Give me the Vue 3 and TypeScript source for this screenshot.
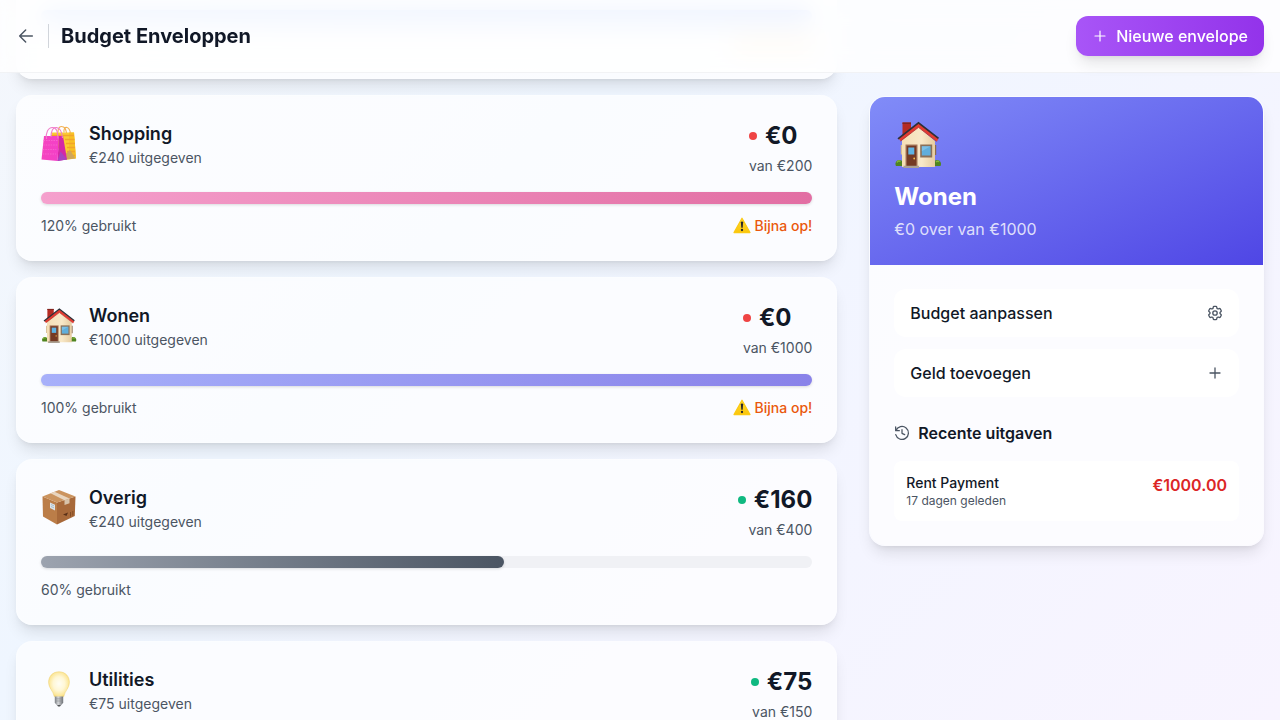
<script setup lang="ts">
interface Envelope {
  name: string
  icon: 'bags' | 'house' | 'box' | 'bulb'
  spent: number
  left: number
  total: number
  percent: number
  tone: string
}

const envelopes: Envelope[] = [
  { name: 'Shopping', icon: 'bags', spent: 240, left: 0, total: 200, percent: 120, tone: 'pink' },
  { name: 'Wonen', icon: 'house', spent: 1000, left: 0, total: 1000, percent: 100, tone: 'indigo' },
  { name: 'Overig', icon: 'box', spent: 240, left: 160, total: 400, percent: 60, tone: 'gray' },
  { name: 'Utilities', icon: 'bulb', spent: 75, left: 75, total: 150, percent: 50, tone: 'amber' },
]
</script>

<template>
  <div class="page">
    <svg class="defs" width="0" height="0" aria-hidden="true">
      <defs>
        <linearGradient id="wall" x1="0" x2="1"><stop offset="0" stop-color="#f5dfb6" /><stop offset=".6" stop-color="#f8e8c8" /><stop offset="1" stop-color="#e6cca0" /></linearGradient>
        <linearGradient id="pinkbag" x1="0" x2="1"><stop offset="0" stop-color="#f545be" /><stop offset="1" stop-color="#f43fc9" /></linearGradient>
        <radialGradient id="glass" cx=".5" cy=".48" r=".56"><stop offset="0" stop-color="#fffef4" /><stop offset=".5" stop-color="#fff7d5" /><stop offset=".85" stop-color="#fce79a" /><stop offset="1" stop-color="#f2d06d" /></radialGradient>
        <linearGradient id="metal" x1="0" x2="1"><stop offset="0" stop-color="#777b80" /><stop offset=".4" stop-color="#d5d7da" /><stop offset="1" stop-color="#6b6e73" /></linearGradient>
        <linearGradient id="warn" x1="0" y1="0" x2="0" y2="1"><stop offset="0" stop-color="#fdd835" /><stop offset="1" stop-color="#fbc60a" /></linearGradient>
        <symbol id="house" viewBox="0 0 48 48">
          <path d="M2 46c-1.600-3 .5-6 3.500-6s4 3 3 6z" fill="#4f8420" />
          <path d="M39.500 46c-1-3 .5-6 3.500-6s5 3 3.500 6z" fill="#4f8420" />
          <path d="M3 42.500c.5-1.500 2.500-2 3.500-1" stroke="#82b53d" stroke-width="1.500" fill="none" />
          <path d="M42 42c1-1.300 2.500-1 3 0" stroke="#82b53d" stroke-width="1.500" fill="none" />
          <path d="M8.500 2.500h8.500v11L8.500 20z" fill="#b52b23" />
          <path d="M8.500 2.500h8.500v1.500H8.500z" fill="#82251f" />
          <path d="M24.500 7L41 21v26H8V20z" fill="url(#wall)" />
          <path d="M41 25h1.200v10H41z" fill="#8b6c4c" />
          <path d="M6.800 25H8v9.500H6.800z" fill="#d8bd92" />
          <path d="M24.500 7.200L43 21.500l1.500-3L24.500 3 4.500 18.500 6.500 21z" fill="#e23c31" />
          <path d="M4 18.800L24.500 2.800l20 15.600" fill="none" stroke="#2d3038" stroke-width="1.700" />
          <path d="M6.500 21.200L24.500 7.400l18 14" fill="none" stroke="#b92d29" stroke-width=".8" />
          <path d="M11.500 24.500h12V47h-12z" fill="#a6785b" />
          <path d="M12.700 25.700h9.600V46h-9.600z" fill="#743a25" />
          <path d="M14.300 27.500h6v7h-6z" fill="#5eb4e5" />
          <circle cx="20.200" cy="38.500" r=".9" fill="#f6c04c" />
          <path d="M26.200 24.500h12V37.500h-12z" fill="#8b7057" />
          <path d="M27.800 26.300h8.800v9.200h-8.800z" fill="#60aedb" />
          <path d="M27.800 26.300h8.800l-8.800 5z" fill="#8bcbee" opacity=".6" />
          <path d="M9.500 45.700h15.500V48H9.500z" fill="#aaa093" />
        </symbol>
        <symbol id="bags" viewBox="0 0 36 36">
          <path d="M10 7.500H33l2 26L23 35z" fill="#fbcb32" />
          <path d="M28 7.500h5l2 26-7-8z" fill="#f8c124" />
          <path d="M10 10.500h23M24 14.500h9.500M25 18.500h9M26 22.500h8M26 26.500h8M27 30.500h7" stroke="#f2a52a" stroke-width="1.300" />
          <path d="M25 28.500l4-3.500 5.500 8.500-9 1z" fill="#cfa65a" />
          <path d="M17 7.500c0-6.500 3-6.500 5.500-5.500S25 6 25.500 8M23 7.500c-.5-4 1-5.500 3-5S29 5 29.500 8.500" fill="none" stroke="#f2b052" stroke-width="1.100" />
          <path d="M3 11h15l-1.500 25L.5 34.500z" fill="url(#pinkbag)" />
          <path d="M18 11h4l4 23.500-9.500 1.500z" fill="#d428a6" />
          <path d="M16.500 36l3-9.500 6.500 8z" fill="#a742c2" />
          <path d="M2.500 15.500h14M2.200 20h14M1.800 24.500h13.500M1.500 29h13.500" stroke="#f96bd0" stroke-width=".8" stroke-dasharray="1.500 1" />
          <path d="M5.500 14C4.500 8 7 2.500 11.500 2.500s5 4.500 5.500 11M10 12C10 6 12 2 15.500 2.500S21 7 21.500 13" fill="none" stroke="#f07cc9" stroke-width="1.100" />
        </symbol>
        <symbol id="box" viewBox="0 0 36 36">
          <path d="M1.500 7.500L16 13.500v22L2 27.500z" fill="#bb7d48" />
          <path d="M16 13.500l18.500-6-.7 19.500L16 35.500z" fill="#a8693a" />
          <path d="M1.500 7.500L18 1l16.500 6.500L16 13.500z" fill="#cb945f" />
          <path d="M9.500 4.200l4-1.500 15 6.800-5 1.700z" fill="#e8d5bf" />
          <path d="M23.500 11.200l5-1.700v4.800l-5 1.700z" fill="#d8c3aa" />
          <path d="M9 13.500l5 2.200v5.800L9 19z" fill="#dce4e9" />
          <path d="M10 15.500l3 1.300M10 17.500l3 1.300" stroke="#9fb5c3" stroke-width=".8" />
          <path d="M22 25.500l5-2-1.500 3.500z" fill="#5a3119" />
          <path d="M29.500 23v4.500M31.800 22v4.500" stroke="#784520" stroke-width=".8" />
        </symbol>
        <symbol id="bulb" viewBox="0 0 36 36">
          <path d="M18 .8C11.500.8 7.600 5.500 7.600 11.300c0 6.200 4.800 8.500 5.600 14.300h9.600c.8-5.800 5.600-8.100 5.600-14.300C28.400 5.500 24.500.8 18 .8z" fill="url(#glass)" stroke="#eed06c" stroke-width=".5" />
          <path d="M13.800 25.600h8.400v6.200l-2.500 3h-3.400l-2.500-3z" fill="url(#metal)" />
          <path d="M14 27.800h8M14 30h8" stroke="#8b8e92" stroke-width=".6" />
          <path d="M16.200 34h3.600l-.8 1.600h-2z" fill="#54565a" />
        </symbol>
      </defs>
    </svg>

    <header class="topbar">
      <div class="heading">
        <button class="back" aria-label="Terug">
          <svg width="16" height="16" viewBox="0 0 24 24" fill="none" stroke="currentColor" stroke-width="2.200" stroke-linecap="round" stroke-linejoin="round"><path d="M21.500 12H2.500M11.500 3l-9 9 9 9" /></svg>
        </button>
        <h1>Budget Enveloppen</h1>
      </div>
      <button class="create">
        <svg width="16" height="16" viewBox="0 0 16 16" fill="none" stroke="currentColor" stroke-width="1.200" stroke-linecap="round"><path d="M8 3v10M3 8h10" /></svg>
        <span>Nieuwe envelope</span>
      </button>
    </header>

    <main class="layout">
      <section class="list">
        <div class="card passed">
          <div class="track"><div class="fill blue"></div></div>
          <div class="glow"></div>
        </div>
        <article v-for="e in envelopes" :key="e.name" class="card">
          <div class="summary">
            <div class="identity">
              <svg class="emoji" width="36" height="36"><use :href="'#' + e.icon" /></svg>
              <div>
                <h3>{{ e.name }}</h3>
                <p class="small">€{{ e.spent }} uitgegeven</p>
              </div>
            </div>
            <div class="balance">
              <div class="amount">
                <span class="dot" :class="{ empty: e.left === 0 }"></span>
                <span>€{{ e.left }}</span>
              </div>
              <p class="small">van €{{ e.total }}</p>
            </div>
          </div>
          <div class="track">
            <div class="fill" :class="e.tone" :style="{ width: Math.min(e.percent, 100) + '%' }"></div>
          </div>
          <div class="usage">
            <span>{{ e.percent }}% gebruikt</span>
            <span v-if="e.percent > 80" class="alert">
              <svg width="18" height="17" viewBox="0 0 18 17"><path d="M9 1.200L17 15.600H1z" fill="url(#warn)" stroke="#fbc913" stroke-width="1.200" stroke-linejoin="round" /><path d="M7.900 5.200c0-1.100 2.200-1.100 2.200 0l-.4 5.600H8.300z" fill="#26262b" /><circle cx="9" cy="13" r="1.150" fill="#26262b" /></svg>
              <span>Bijna op!</span>
            </span>
          </div>
        </article>
      </section>

      <aside class="detail">
        <div class="hero">
          <svg width="48" height="48"><use href="#house" /></svg>
          <h2>Wonen</h2>
          <p>€0 over van €1000</p>
        </div>
        <div class="body">
          <div class="actions">
            <button class="action">
              <span>Budget aanpassen</span>
              <svg width="16" height="16" viewBox="0 0 24 24" fill="none" stroke="currentColor" stroke-width="1.800" stroke-linecap="round" stroke-linejoin="round"><g transform="translate(-1.200 -1.200) scale(1.100)"><path d="M9.594 3.940c.09-.542.56-.94 1.110-.94h2.593c.55 0 1.020.398 1.110.94l.213 1.281c.063.374.313.686.645.87.074.04.147.083.22.127.325.196.72.257 1.075.124l1.217-.456a1.125 1.125 0 0 1 1.370.49l1.296 2.247a1.125 1.125 0 0 1-.26 1.431l-1.003.827c-.293.241-.438.613-.43.992a7.723 7.723 0 0 1 0 .255c-.008.378.137.750.43.991l1.004.827c.424.350.534.955.26 1.430l-1.298 2.247a1.125 1.125 0 0 1-1.369.491l-1.217-.456c-.355-.133-.750-.072-1.076.124a6.470 6.470 0 0 1-.22.128c-.331.183-.581.495-.644.869l-.213 1.281c-.09.543-.56.940-1.110.940h-2.594c-.55 0-1.019-.398-1.110-.940l-.213-1.281c-.062-.374-.312-.686-.644-.870a6.520 6.520 0 0 1-.22-.127c-.325-.196-.72-.257-1.076-.124l-1.217.456a1.125 1.125 0 0 1-1.369-.490l-1.297-2.247a1.125 1.125 0 0 1 .26-1.431l1.004-.827c.292-.240.437-.613.430-.991a6.932 6.932 0 0 1 0-.255c.007-.380-.138-.751-.430-.992l-1.004-.827a1.125 1.125 0 0 1-.26-1.430l1.297-2.247a1.125 1.125 0 0 1 1.370-.491l1.216.456c.356.133.751.072 1.076-.124.072-.044.146-.086.220-.128.332-.183.582-.495.644-.869l.214-1.280Z" /><circle cx="12" cy="12" r="3" /></g></svg>
            </button>
            <button class="action">
              <span>Geld toevoegen</span>
              <svg width="16" height="16" viewBox="0 0 16 16" fill="none" stroke="currentColor" stroke-width="1.300" stroke-linecap="round"><path d="M8 3v10M3 8h10" /></svg>
            </button>
          </div>
          <h4>
            <svg width="16" height="16" viewBox="0 0 24 24" fill="none" stroke="currentColor" stroke-width="1.900" stroke-linecap="round" stroke-linejoin="round"><path d="M2.500 3v5.500H8M3 8.200A9.700 9.700 0 1 1 2.600 14.500M12 7v5.500l4 2" /></svg>
            <span>Recente uitgaven</span>
          </h4>
          <div class="expense">
            <div>
              <p class="payee">Rent Payment</p>
              <p class="when">17 dagen geleden</p>
            </div>
            <strong>€1000.00</strong>
          </div>
        </div>
      </aside>
    </main>
  </div>
</template>

<style>
html, body { overflow: hidden; }
</style>

<style scoped>
* { box-sizing: border-box; margin: 0; }
.page {
  height: 720px;
  overflow: hidden;
  background: linear-gradient(135deg, #f4f7fc, #eff6ff 34%, #f8f4ff);
  font-family: Inter, "Liberation Sans", sans-serif;
  font-size: 16px;
  line-height: 24px;
  color: #111827;
  -webkit-font-smoothing: antialiased;
}
.defs { position: absolute; }
button { font: inherit; color: inherit; border: 0; padding: 0; background: none; text-align: left; }
svg { display: block; flex-shrink: 0; }
.topbar {
  position: relative;
  z-index: 5;
  height: 73px;
  padding: 0 16px;
  display: flex;
  align-items: center;
  justify-content: space-between;
  padding-bottom: 1px;
  background: rgba(255, 255, 255, .8);
  backdrop-filter: blur(12px);
  box-shadow: inset 0 -1px rgba(229, 231, 235, .5);
}
.heading { display: flex; align-items: center; }
.back { padding: 0 2px; color: #4b5563; }
h1 { font-size: 20px; line-height: 24px; font-weight: 700; padding-left: 12px; margin-left: 12px; border-left: 1px solid #d1d5db; }
.create {
  height: 40px;
  padding: 0 16px;
  display: flex;
  align-items: center;
  gap: 8px;
  border-radius: 12px;
  color: #fff;
  font-weight: 500;
  background: linear-gradient(90deg, #a855f7, #9333ea);
  box-shadow: 0 10px 15px -3px rgba(0, 0, 0, .1), 0 4px 6px -4px rgba(0, 0, 0, .1);
}
.layout {
  display: grid;
  grid-template-columns: repeat(3, minmax(0, 1fr));
  gap: 32px;
  padding: 0 16px;
  align-items: start;
}
.list { grid-column: span 2; display: grid; gap: 16px; margin-top: -160px; min-width: 0; }
.card {
  height: 166px;
  padding: 24px;
  border: 1px solid rgba(255, 255, 255, .2);
  border-radius: 16px;
  background: rgba(255, 255, 255, .7);
  box-shadow: 0 10px 15px -3px rgba(0, 0, 0, .1), 0 4px 6px -4px rgba(0, 0, 0, .1);
}
.passed { padding-top: 96px; }
.glow { width: 79px; height: 12px; margin: 16px 0 0 auto; background: #fce3c0; }
.summary { display: flex; justify-content: space-between; margin-bottom: 16px; }
.identity { display: flex; align-items: center; gap: 12px; height: 48px; }
.emoji { position: relative; top: -1px; }
h3 { font-size: 18px; line-height: 28px; font-weight: 600; }
.small { font-size: 14px; line-height: 20px; color: #4b5563; }
.balance { text-align: right; }
.amount { display: flex; align-items: center; gap: 8px; font-size: 24px; line-height: 32px; font-weight: 700; margin-bottom: 4px; }
.dot { width: 8px; height: 8px; border-radius: 50%; background: #10b981; }
.dot.empty { background: #ef4444; }
.track { height: 12px; border-radius: 6px; background: #f0f1f5; }
.fill { height: 12px; border-radius: 6px; box-shadow: 0 1px 3px rgba(0, 0, 0, .14); }
.blue { background: linear-gradient(90deg, #a9c9fd, #8fb0fb); }
.pink { background: linear-gradient(90deg, #f5a0cd, #e26ea3); }
.indigo { background: linear-gradient(90deg, #a7b0fa, #8982e9); }
.gray { background: linear-gradient(90deg, #9ca3af, #4b5563); }
.amber { background: linear-gradient(90deg, #fcd34d, #f59e0b); }
.usage { display: flex; justify-content: space-between; margin-top: 12px; font-size: 14px; line-height: 20px; color: #4b5563; }
.alert { display: flex; align-items: center; gap: 4px; color: #ea580c; font-weight: 500; }
.alert svg { margin-bottom: 2px; }
.detail {
  margin-top: 23px;
  height: 450px;
  border: 1px solid rgba(255, 255, 255, .6);
  border-radius: 16px;
  overflow: hidden;
  background: rgba(255, 255, 255, .7);
  background-clip: padding-box;
  box-shadow: 0 10px 15px -3px rgba(0, 0, 0, .1), 0 4px 6px -4px rgba(0, 0, 0, .1);
}
.hero { height: 168px; padding: 23px 24px; color: #fff; background: linear-gradient(to bottom right, #818cf8, #4f46e5); }
h2 { font-size: 24px; line-height: 32px; font-weight: 700; margin-top: 13px; }
.hero p { margin-top: 4px; color: rgba(255, 255, 255, .8); }
.body { padding: 24px; }
.actions { display: grid; gap: 12px; }
.action {
  height: 48px;
  padding: 0 16px;
  display: flex;
  align-items: center;
  justify-content: space-between;
  border-radius: 12px;
  background: #fff;
  font-weight: 500;
}
.action svg, h4 svg { color: #4b5563; }
h4 { display: flex; align-items: center; gap: 8px; font-weight: 600; font-size: 16px; line-height: 24px; margin: 24px 0 16px; }
.expense { height: 60px; padding: 12px; display: flex; justify-content: space-between; border-radius: 8px; background: #fff; }
.payee { font-size: 14px; line-height: 20px; font-weight: 500; }
.when { font-size: 12px; line-height: 16px; color: #4b5563; }
.expense strong { font-weight: 600; color: #dc2626; }
</style>
